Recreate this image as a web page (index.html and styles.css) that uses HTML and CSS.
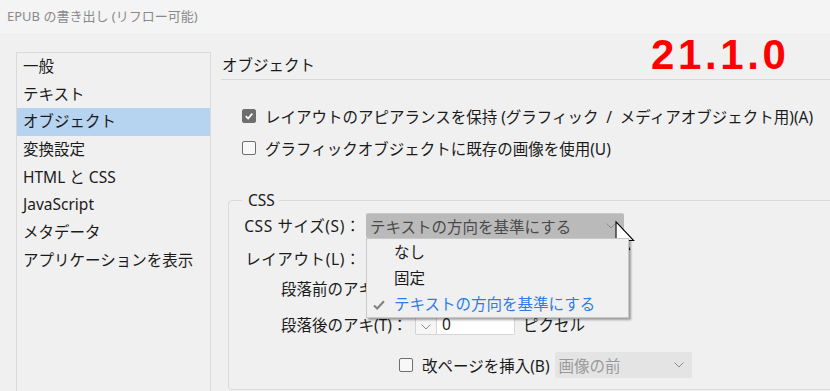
FILE: index.html
```html
<!DOCTYPE html>
<html lang="ja">
<head>
	<meta charset="utf-8">
	<title>EPUB の書き出し (リフロー可能)</title>
	<link rel="stylesheet" href="styles.css">
</head>
<body>

	<div class="titlebar">EPUB の書き出し (リフロー可能)</div>

	<div class="window">
		<ul class="nav">
			<li>一般</li>
			<li>テキスト</li>
			<li class="active">オブジェクト</li>
			<li>変換設定</li>
			<li>HTML と CSS</li>
			<li>JavaScript</li>
			<li>メタデータ</li>
			<li>アプリケーションを表示</li>
		</ul>

		<div class="panel">
			<div class="panel-title">オブジェクト</div>

			<div class="options">
				<div class="check">
					<span class="box checked"><svg viewBox="0 0 14 14"><polyline points="3.2,7.2 6,10 10.8,4.2" /></svg></span>
					レイアウトのアピアランスを保持 (グラフィック&ensp;/&ensp;メディアオブジェクト用)(A)
				</div>
				<div class="check">
					<span class="box"></span>
					グラフィックオブジェクトに既存の画像を使用(U)
				</div>
			</div>

			<fieldset class="group">
				<legend>CSS</legend>

				<div class="row row-size">
					<span class="label">CSS サイズ(S)：</span>
					<div class="select pressed">
						<span>テキストの方向を基準にする</span>
						<svg class="chev" viewBox="0 0 10 6"><polyline points="0.5,0.5 5,5 9.5,0.5" /></svg>
						<ul class="popup">
							<li>なし</li>
							<li>固定</li>
							<li class="current"><svg class="tick" viewBox="0 0 12 10"><polyline points="1,5.5 4.2,8.5 11,1.2" /></svg>テキストの方向を基準にする</li>
						</ul>
					</div>
				</div>

				<div class="row row-layout">
					<span class="label">レイアウト(L)：</span>
					<div class="select">
						<span>画像の前</span>
						<svg class="chev" viewBox="0 0 10 6"><polyline points="0.5,0.5 5,5 9.5,0.5" /></svg>
					</div>
				</div>

				<div class="row row-space row-before">
					<span class="label">段落前のアキ(E)：</span>
					<span class="stepper"><svg class="chev" viewBox="0 0 10 6"><polyline points="0.5,0.5 5,5 9.5,0.5" /></svg></span>
					<span class="field">0</span>
					<span class="unit">ピクセル</span>
				</div>

				<div class="row row-space row-after">
					<span class="label">段落後のアキ(T)：</span>
					<span class="stepper"><svg class="chev" viewBox="0 0 10 6"><polyline points="0.5,0.5 5,5 9.5,0.5" /></svg></span>
					<span class="field">0</span>
					<span class="unit">ピクセル</span>
				</div>

				<div class="row row-break">
					<span class="box"></span>
					<span class="break-text">改ページを挿入(B)</span>
					<div class="select disabled">
						<span>画像の前</span>
						<svg class="chev" viewBox="0 0 10 6"><polyline points="0.5,0.5 5,5 9.5,0.5" /></svg>
					</div>
				</div>
			</fieldset>
		</div>
	</div>

	<div class="version">21.1.0</div>

	<svg class="cursor" viewBox="0 0 12 19">
		<path d="M0.5 0.5 L0.5 16.2 L4.1 12.9 L6.6 18.4 L8.9 17.4 L6.5 12 L11.3 12 Z" />
	</svg>

</body>
</html>
```

FILE: styles.css
```css
html, body {
	margin: 0;
	overflow: hidden;
}
body {
	width: 830px;
	height: 391px;
	background-color: #f0f0f0;
	color: #1b1b1b;
	font-family: "Noto Sans", "Noto Sans CJK JP", sans-serif;
	font-size: 15.5px;
	position: relative;
}
ul {
	list-style: none;
	margin: 0;
	padding: 0;
}

.titlebar {
	height: 33px;
	line-height: 33px;
	padding-left: 7px;
	background-color: #f4f4f4;
	color: #8a8a8a;
	font-size: 13px;
}

.window {
	display: flex;
	padding: 19px 0 0 16px;
}

/* left category list */
.nav {
	width: 193px;
	height: 338px;
	flex-shrink: 0;
	border: 1px solid #dadada;
	border-bottom: 0;
	padding-top: 0;
}
.nav li {
	height: 27.7px;
	line-height: 27.7px;
	padding-left: 6px;
	white-space: nowrap;
}
.nav li.active {
	background-color: #b6d3f0;
}

.panel {
	flex: 1;
	min-width: 0;
	margin-left: 10px;
}
.panel-title {
	height: 27px;
	line-height: 26px;
	padding-left: 1px;
	border-bottom: 1px solid #d9d9d9;
}

.options {
	padding: 20px 0 0 21px;
}
.check {
	display: flex;
	align-items: center;
	height: 32px;
	white-space: nowrap;
}
.check .box {
	margin-right: 9px;
}

.box {
	display: inline-flex;
	align-items: center;
	justify-content: center;
	box-sizing: border-box;
	width: 14px;
	height: 14px;
	flex-shrink: 0;
	border: 1px solid #6e6e6e;
	border-radius: 2px;
	background-color: #f8f8f8;
}
.box.checked {
	background-color: #6e6e6e;
}
.box svg {
	width: 14px;
	height: 14px;
	fill: none;
	stroke: #fff;
	stroke-width: 2;
}

/* CSS group */
.group {
	margin: 26px -40px 0 7px;
	padding: 3px 0 11px 7px;
	border: 1px solid #dadada;
	border-radius: 4px;
	min-width: 0;
}
.group legend {
	margin-left: 6px;
	padding: 0 4px 0 6px;
	line-height: 20px;
}

.row {
	display: flex;
	align-items: center;
	white-space: nowrap;
}
.row-size {
	height: 25px;
}
.row-layout {
	height: 25px;
	margin-top: 8px;
}
.row-size .label,
.row-layout .label {
	width: 125px;
	margin-right: 5px;
	text-align: right;
	letter-spacing: 0.6px;
}
.row-before {
	margin-top: 6px;
}
.row-after {
	margin-top: 14px;
}
.row-space {
	height: 22px;
	padding-left: 45px;
}
.row-space .label {
	width: 134px;
}
.row-break {
	height: 26px;
	margin-top: 17px;
	padding-left: 163px;
}
.break-text {
	margin: 0 5px 0 9px;
}

.select {
	position: relative;
	display: flex;
	align-items: center;
	box-sizing: border-box;
	width: 258px;
	height: 25px;
	padding: 0 8px 0 4px;
	border-radius: 2px;
	background-color: #e2e2e2;
	color: #4a4a4a;
}
.select span {
	flex: 1;
}
.select.pressed {
	background-color: #bababa;
	border-top: 1px solid #c9c9c9;
}
.select.disabled {
	width: 137px;
	height: 26px;
	background-color: #e4e4e4;
	color: #9a9a9a;
}
.chev {
	width: 10px;
	height: 6px;
	fill: none;
	stroke: #8a8a8a;
	stroke-width: 1;
}

.popup {
	position: absolute;
	z-index: 5;
	top: 100%;
	left: 0;
	width: 261px;
	border: 1px solid #c8c8c8;
	background-color: #f0f0f0;
	box-shadow: 2px 2px 2px rgba(0, 0, 0, 0.35);
	color: #1b1b1b;
}
.popup li {
	position: relative;
	height: 26px;
	line-height: 26px;
	padding-left: 27px;
}
.popup li.current {
	color: #2f7ce4;
}
.tick {
	position: absolute;
	left: 6px;
	top: 9px;
	width: 12px;
	height: 10px;
	fill: none;
	stroke: #808080;
	stroke-width: 2;
}

.stepper {
	display: inline-flex;
	align-items: center;
	justify-content: center;
	box-sizing: border-box;
	width: 22px;
	height: 22px;
	border: 1px solid #d4d4d4;
	border-radius: 2px 0 0 2px;
	background-color: #f6f6f6;
}
.stepper .chev {
	margin-top: 6px;
}
.field {
	box-sizing: border-box;
	width: 78px;
	height: 22px;
	line-height: 20px;
	padding-left: 5px;
	border: 1px solid #d6d6d6;
	border-left: 0;
	border-radius: 0 2px 2px 0;
	background-color: #fff;
}
.unit {
	margin-left: 8px;
}

/* overlays */
.version {
	position: absolute;
	left: 651px;
	top: 34px;
	color: #ff0000;
	font-family: "Liberation Sans", Arial, sans-serif;
	font-weight: bold;
	font-size: 42px;
	line-height: 42px;
	letter-spacing: 3.6px;
}
.cursor {
	position: absolute;
	left: 615px;
	top: 221px;
	width: 20px;
	height: 31px;
	fill: #fff;
	stroke: #000;
	stroke-width: 0.65;
	stroke-linejoin: miter;
	overflow: visible;
}
```
